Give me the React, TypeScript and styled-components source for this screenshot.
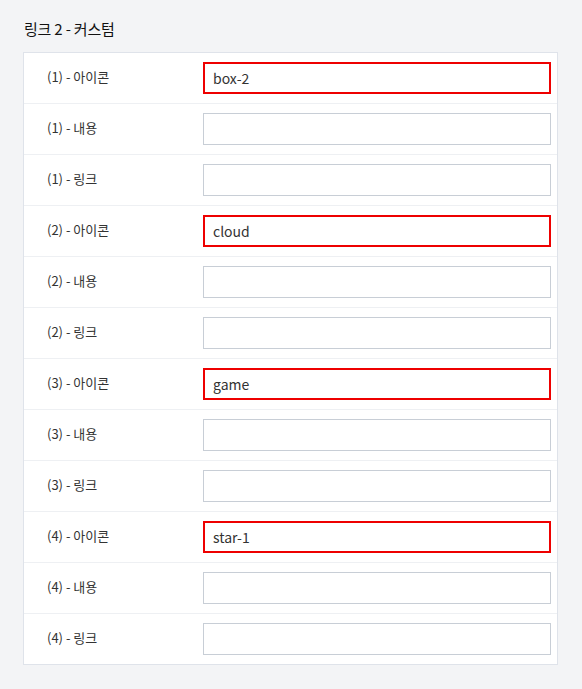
import React from "react";
import styled, { createGlobalStyle } from "styled-components";

const Global = createGlobalStyle`
  html, body { margin: 0; padding: 0; background: #f3f4f6; }
  body { font-family: "Noto Sans CJK KR", "Noto Sans", sans-serif; color: #333; }
  * { box-sizing: border-box; }
`;

const Page = styled.div`
  padding: 17px 24px 24px 23px;
`;

const Title = styled.h2`
  margin: 0 0 12px 1px;
  font-size: 15px;
  font-weight: 400;
  line-height: 23px;
  letter-spacing: -0.2px;
  color: #111;
`;

const Card = styled.div`
  width: 535px;
  background: #fff;
  border: 1px solid #dfe3ea;
`;

const Row = styled.div<{ $last?: boolean }>`
  display: grid;
  grid-template-columns: 179px 1fr;
  align-items: center;
  height: ${(p) => (p.$last ? 50 : 51)}px;
  border-bottom: ${(p) => (p.$last ? "none" : "1px solid #eef0f3")};
`;

const Label = styled.div`
  padding-left: 23px;
  font-size: 13px;
  line-height: 18px;
  margin-top: -2px;
  color: #333;
`;

const Cell = styled.div`
  padding-right: 6px;
  display: flex;
`;

const Input = styled.input<{ $filled: boolean }>`
  width: 348px;
  height: 32px;
  border: ${(p) => (p.$filled ? "2px solid #ee0000" : "1px solid #c8ced6")};
  padding: 0 ${(p) => (p.$filled ? 8 : 9)}px 1px;
  font-family: "Noto Sans CJK KR", "Noto Sans", sans-serif;
  font-size: 14px;
  color: #333;
  background: #fff;
  outline: none;
  border-radius: 0;
`;

const icons = ["box-2", "cloud", "game", "star-1"];

export default function App() {
  const rows: { label: string; value: string }[] = [];
  icons.forEach((ic, i) => {
    const n = i + 1;
    rows.push({ label: `(${n}) - 아이콘`, value: ic });
    rows.push({ label: `(${n}) - 내용`, value: "" });
    rows.push({ label: `(${n}) - 링크`, value: "" });
  });
  return (
    <>
      <Global />
      <Page>
        <Title>링크 2 - 커스텀</Title>
        <Card>
          {rows.map((r, i) => (
            <Row key={i} $last={i === rows.length - 1}>
              <Label>{r.label}</Label>
              <Cell>
                <Input $filled={r.value !== ""} defaultValue={r.value} readOnly />
              </Cell>
            </Row>
          ))}
        </Card>
      </Page>
    </>
  );
}
